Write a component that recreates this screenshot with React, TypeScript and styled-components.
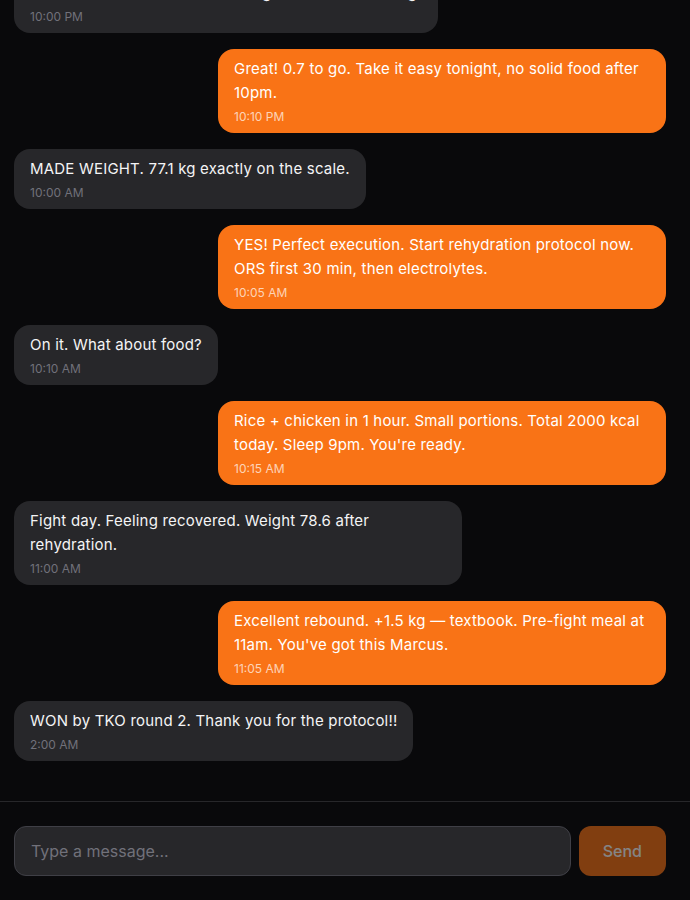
import { useEffect, useRef } from "react";
import styled, { createGlobalStyle } from "styled-components";

const GlobalStyle = createGlobalStyle`
	html, body, #root {
		height: 100%;
	}
	body {
		margin: 0;
		background: #09090b;
		font-family: Inter, "Noto Sans", sans-serif;
		-webkit-font-smoothing: antialiased;
	}
	* {
		box-sizing: border-box;
	}
`;

const ChatStyle = styled.div`
	height: 100vh;
	display: flex;
	flex-direction: column;
	background: #09090b;
	color: #f4f4f5;
`;

const MessageList = styled.div`
	flex: 1;
	overflow-y: auto;
	scrollbar-width: none;
	padding: 16px 24px 40px 14px;
	display: flex;
	flex-direction: column;
	gap: 16px;
	&::-webkit-scrollbar {
		display: none;
	}
`;

const Bubble = styled.div<{ $mine: boolean }>`
	align-self: ${(p) => (p.$mine ? "flex-end" : "flex-start")};
	max-width: 448px;
	padding: 8px 16px;
	border-radius: 16px;
	background: ${(p) => (p.$mine ? "#f97316" : "#27272a")};
	color: ${(p) => (p.$mine ? "#ffffff" : "#f4f4f5")};
	& > p {
		margin: 0;
		font-size: 15px;
		line-height: 24px;
		letter-spacing: 0.2px;
	}
	& > span {
		display: block;
		margin-top: 4px;
		font-size: 12px;
		line-height: 16px;
		color: ${(p) => (p.$mine ? "rgba(255, 255, 255, 0.7)" : "#71717a")};
	}
`;

const InputBar = styled.div`
	border-top: 1px solid #27272a;
	padding: 24px 24px 24px 14px;
	display: flex;
	gap: 8px;
`;

const TextInput = styled.input`
	flex: 1;
	height: 50px;
	padding: 0 16px;
	border-radius: 12px;
	border: 1px solid #3f3f46;
	background: #27272a;
	color: #f4f4f5;
	font-family: inherit;
	font-size: 16px;
	outline: none;
	&::placeholder {
		color: #71717a;
	}
`;

const SendButton = styled.button`
	height: 50px;
	padding: 0 24px;
	border: none;
	border-radius: 12px;
	background: #f97316;
	color: #ffffff;
	font-family: inherit;
	font-size: 16px;
	font-weight: 500;
	opacity: 0.5;
	cursor: not-allowed;
`;

const messages = [
	{ mine: false, text: "Morning weigh-in 78.9. Cutting water today like you said.", time: "8:00 AM" },
	{ mine: true, text: "Good. Distilled water only from noon, light sweat session tonight.", time: "8:12 AM" },
	{ mine: false, text: "Down to 77.8 after sauna. Feeling drained but holding.", time: "10:00 PM" },
	{ mine: true, text: "Great! 0.7 to go. Take it easy tonight, no solid food after 10pm.", time: "10:10 PM" },
	{ mine: false, text: "MADE WEIGHT. 77.1 kg exactly on the scale.", time: "10:00 AM" },
	{ mine: true, text: "YES! Perfect execution. Start rehydration protocol now. ORS first 30 min, then electrolytes.", time: "10:05 AM" },
	{ mine: false, text: "On it. What about food?", time: "10:10 AM" },
	{ mine: true, text: "Rice + chicken in 1 hour. Small portions. Total 2000 kcal today. Sleep 9pm. You're ready.", time: "10:15 AM" },
	{ mine: false, text: "Fight day. Feeling recovered. Weight 78.6 after rehydration.", time: "11:00 AM" },
	{ mine: true, text: "Excellent rebound. +1.5 kg \u2014 textbook. Pre-fight meal at 11am. You've got this Marcus.", time: "11:05 AM" },
	{ mine: false, text: "WON by TKO round 2. Thank you for the protocol!!", time: "2:00 AM" },
];

const App = () => {
	const listRef = useRef<HTMLDivElement>(null);

	useEffect(() => {
		if (listRef.current) {
			listRef.current.scrollTop = listRef.current.scrollHeight;
		}
	}, []);

	return (
		<>
			<GlobalStyle />
			<ChatStyle>
				<MessageList ref={listRef}>
					{messages.map((m, i) => (
						<Bubble key={i} $mine={m.mine}>
							<p>{m.text}</p>
							<span>{m.time}</span>
						</Bubble>
					))}
				</MessageList>
				<InputBar>
					<TextInput placeholder="Type a message..." />
					<SendButton disabled>Send</SendButton>
				</InputBar>
			</ChatStyle>
		</>
	);
};

export default App;
